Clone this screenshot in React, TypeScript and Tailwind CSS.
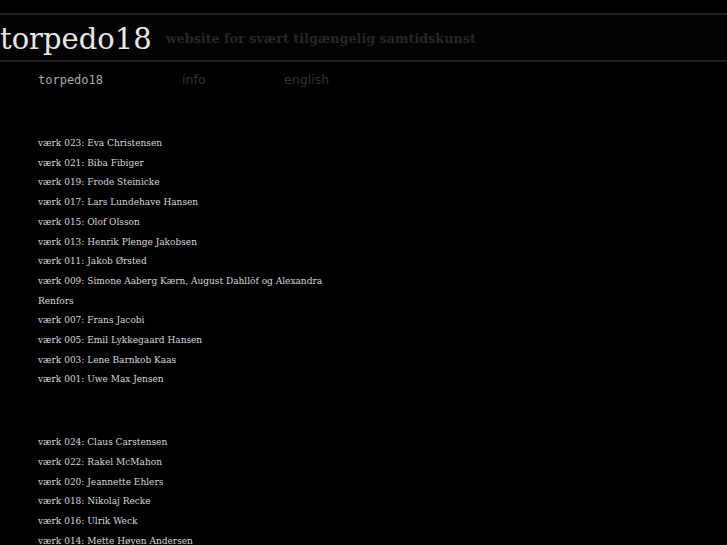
import React from "react";

const first = [
  ["023", "Eva Christensen"],
  ["021", "Biba Fibiger"],
  ["019", "Frode Steinicke"],
  ["017", "Lars Lundehave Hansen"],
  ["015", "Olof Olsson"],
  ["013", "Henrik Plenge Jakobsen"],
  ["011", "Jakob Ørsted"],
  ["009", "Simone Aaberg Kærn, August Dahllöf og Alexandra Renfors"],
  ["007", "Frans Jacobi"],
  ["005", "Emil Lykkegaard Hansen"],
  ["003", "Lene Barnkob Kaas"],
  ["001", "Uwe Max Jensen"],
];

const second = [
  ["024", "Claus Carstensen"],
  ["022", "Rakel McMahon"],
  ["020", "Jeannette Ehlers"],
  ["018", "Nikolaj Recke"],
  ["016", "Ulrik Weck"],
  ["014", "Mette Høyen Andersen"],
  ["012", "Kenneth Balfelt"],
];

const WorkList = ({ items }: { items: string[][] }) => (
  <ul className="w-[300px] text-[10px] leading-[19.7px] text-[#d8d8d8] [font-stretch:condensed]">
    {items.map(([nr, name]) => (
      <li key={nr}>
        <a href="#">
          værk {nr}: {name}
        </a>
      </li>
    ))}
  </ul>
);

const App = () => {
  return (
    <div className="h-[545px] overflow-hidden bg-black font-['DejaVu_Serif',serif]">
      <div className="h-[13px]" />
      <header className="bg-[#030303] border-y-2 border-[#222] h-[49px] flex items-end pb-[6px] whitespace-nowrap">
        <h1 className="text-[#e8e8e8] text-[29px] leading-none">torpedo18</h1>
        <span className="ml-[14px] mb-[8px] text-[12.75px] font-bold text-[#272727] leading-none">
          website for svært tilgængelig samtidskunst
        </span>
      </header>
      <nav className="flex pl-[38px] pt-[10px] text-[12px] leading-[16px]">
        <a href="#" className="w-[144px] text-[#aaa] font-['DejaVu_Sans_Mono',monospace]">
          torpedo18
        </a>
        <a href="#" className="w-[102px] text-[#333] text-[12.6px] font-['DejaVu_Sans',sans-serif]">
          info
        </a>
        <a href="#" className="text-[#333] text-[12.6px] font-['DejaVu_Sans',sans-serif]">
          english
        </a>
      </nav>
      <main className="pl-[38px] pt-[45px]">
        <WorkList items={first} />
        <div className="h-[43px]" />
        <WorkList items={second} />
      </main>
    </div>
  );
};

export default App;
